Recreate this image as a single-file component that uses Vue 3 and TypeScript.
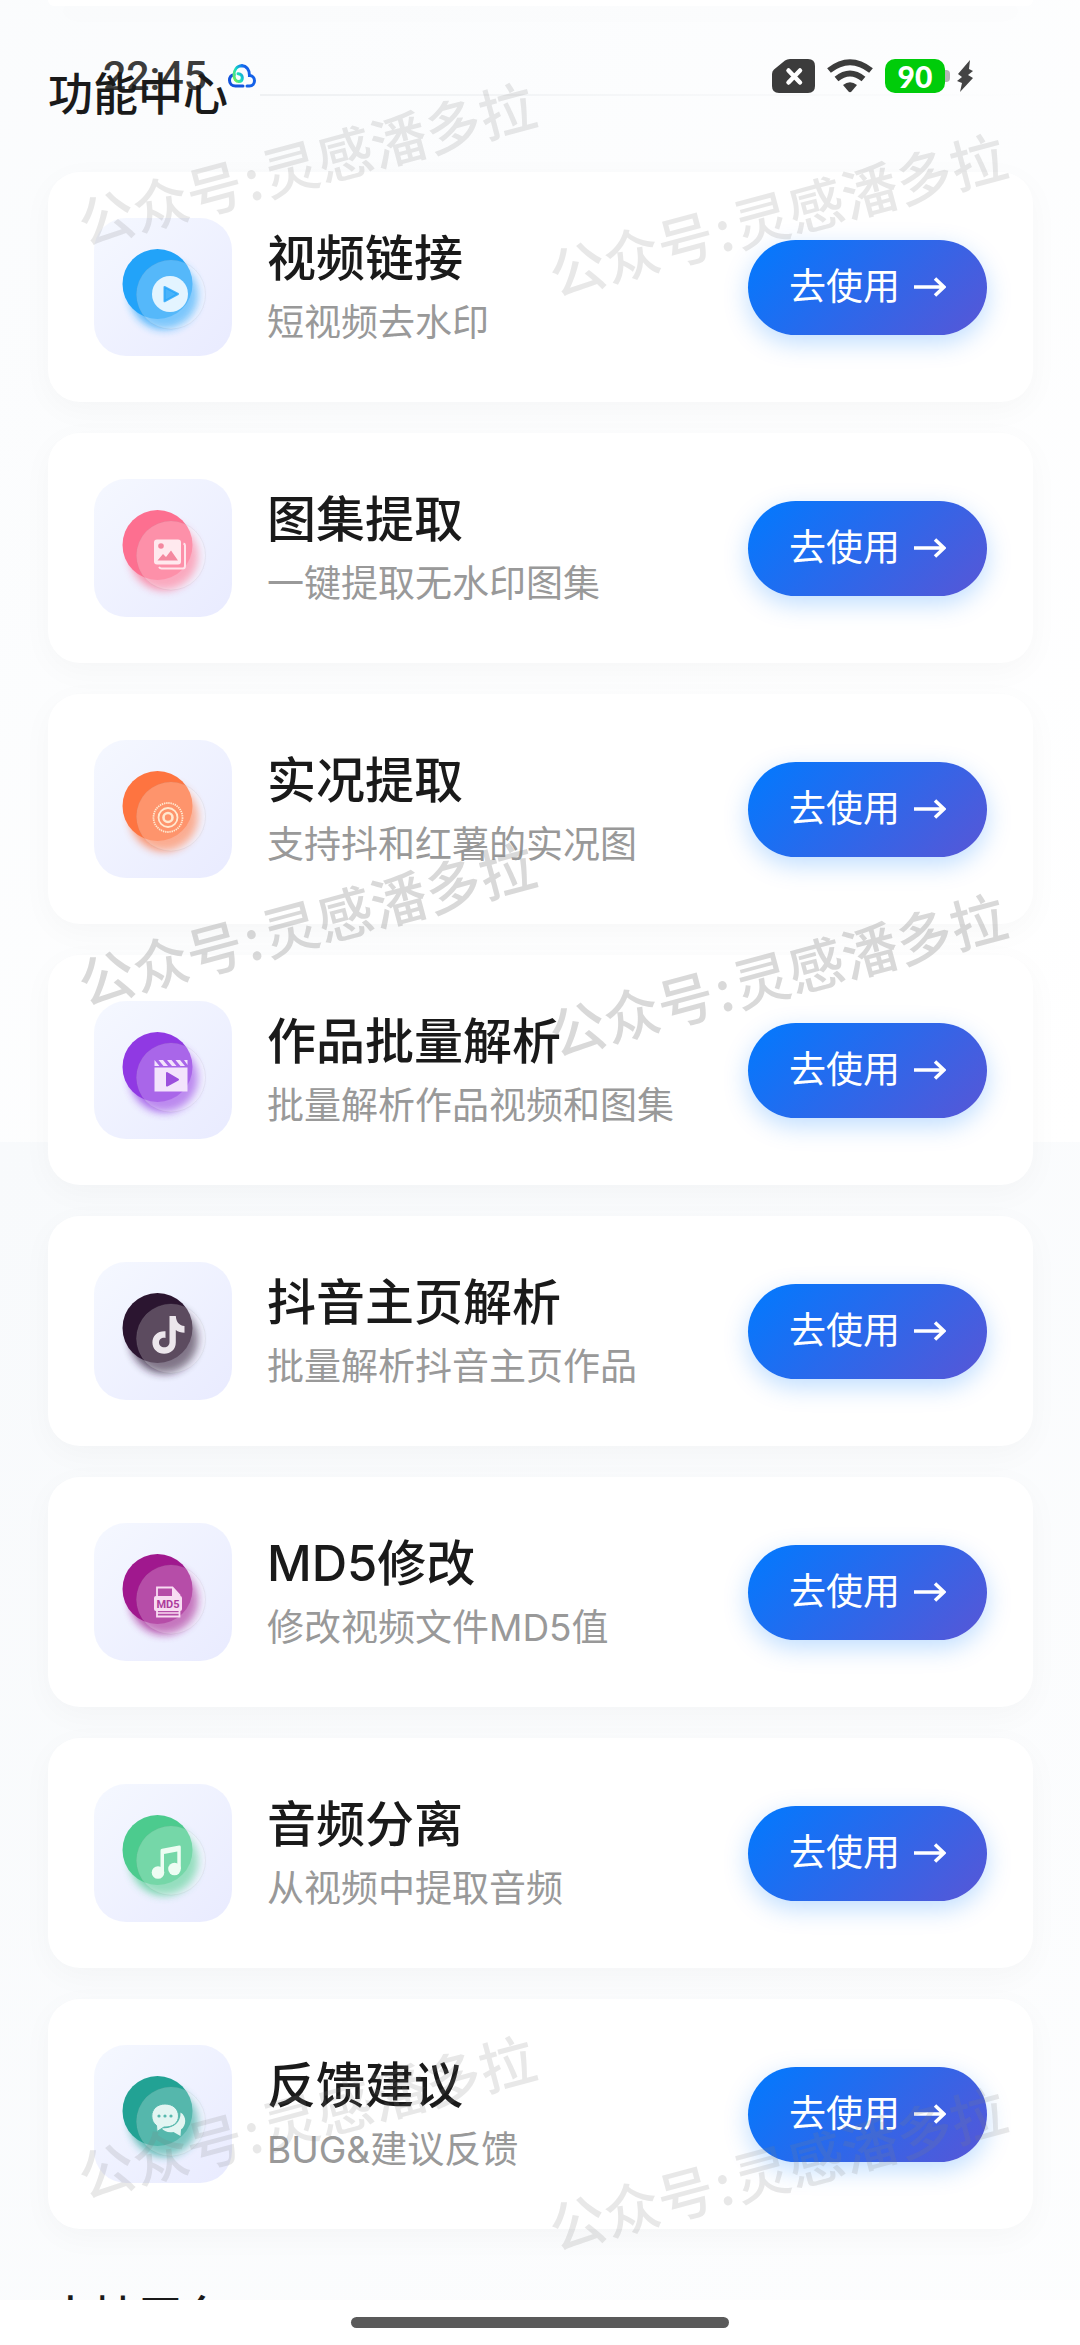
<script setup lang="ts">
type IconName = 'video' | 'gallery' | 'live' | 'batch' | 'note' | 'md5' | 'music' | 'chat'

interface Feature {
  icon: IconName
  color: string
  title: string
  desc: string
}

interface Mark {
  x: number
  y: number
  strong: boolean
}

const features: Feature[] = [
  { icon: 'video', color: '#22a3f9', title: '视频链接', desc: '短视频去水印' },
  { icon: 'gallery', color: '#fd6f90', title: '图集提取', desc: '一键提取无水印图集' },
  { icon: 'live', color: '#fe7440', title: '实况提取', desc: '支持抖和红薯的实况图' },
  { icon: 'batch', color: '#9039e3', title: '作品批量解析', desc: '批量解析作品视频和图集' },
  { icon: 'note', color: '#2b1530', title: '抖音主页解析', desc: '批量解析抖音主页作品' },
  { icon: 'md5', color: '#a0188e', title: 'MD5修改', desc: '修改视频文件MD5值' },
  { icon: 'music', color: '#4ccb8e', title: '音频分离', desc: '从视频中提取音频' },
  { icon: 'chat', color: '#22a294', title: '反馈建议', desc: 'BUG&建议反馈' },
]

// Watermark centres, as percentages of the screen.
const marks: Mark[] = [
  { x: 28.3, y: 6.9, strong: false },
  { x: 71.9, y: 9.1, strong: false },
  { x: 28.3, y: 39.3, strong: true },
  { x: 71.9, y: 41.5, strong: true },
  { x: 28.3, y: 90.2, strong: false },
  { x: 71.9, y: 92.4, strong: false },
]
</script>

<template>
  <div class="screen">
    <header class="status">
      <span class="time">22:45</span>
      <svg class="cloud" viewBox="0 0 28 24" aria-hidden="true">
        <defs>
          <linearGradient id="cloud-loop" x1="0" y1="1" x2="1" y2="0">
            <stop offset="0" stop-color="#7df04a" />
            <stop offset="0.5" stop-color="#16dcc0" />
            <stop offset="1" stop-color="#1272f2" />
          </linearGradient>
        </defs>
        <path d="M15 22H7.500C4 22 1.500 19.500 1.500 16.300C1.500 13.300 3.500 11.200 6 10.700" fill="none" stroke="#1254dd" stroke-width="3" stroke-linecap="round" />
        <path d="M19 22H21.500C24.500 22 26.500 19.600 26.500 16.800C26.500 13.800 24.300 11.800 21.500 11.600C21.800 6 18.500 1.800 13.700 1.800" fill="none" stroke="#1461e8" stroke-width="3" stroke-linecap="round" />
        <path d="M14 1.800C8.500 2 6 6.500 6 11C6 15 8 17.500 10.800 17.500C13.200 17.500 14.300 15.800 14.300 13.800C14.300 11.500 12.500 10 10 9.700" fill="none" stroke="url(#cloud-loop)" stroke-width="3" stroke-linecap="round" />
      </svg>
      <div class="signals">
        <svg class="sim" viewBox="0 0 43 34" aria-hidden="true">
          <path d="M13 1.500Q15 0 18 0H36Q43 0 43 7V27Q43 34 36 34H7Q0 34 0 27V15Q0 12 2 10.500Z" fill="#3c3c3c" />
          <path d="M16.500 11.500L28 23.500M28 11.500L16.500 23.500" stroke="#fff" stroke-width="4.500" stroke-linecap="round" />
        </svg>
        <svg class="wifi" viewBox="0 0 46 34" aria-hidden="true">
          <path d="M2 11.500Q23-5 44 11.500" fill="none" stroke="#3c3c3c" stroke-width="6" />
          <path d="M9.500 20Q23 9 36.500 20" fill="none" stroke="#3c3c3c" stroke-width="6" />
          <path d="M16 26Q23 20.500 30 26L24.500 32.500Q23 34 21.500 32.500Z" fill="#3c3c3c" />
        </svg>
        <span class="battery">90</span>
        <svg class="bolt" viewBox="0 0 16 32" aria-hidden="true">
          <path d="M13 0L1 14L5 17L0 21L5 23L3 32L16 18L11 15L16 11L12 9Z" fill="#444" />
        </svg>
      </div>
    </header>

    <main class="content">
      <div class="card-tail"></div>

      <h2 class="heading"><span>功能中心</span></h2>
      <ul class="list">
        <li v-for="f in features" :key="f.title" class="card">
          <svg class="icon" viewBox="0 0 138 138" aria-hidden="true">
            <defs>
              <filter :id="'blur-' + f.icon" x="-30%" y="-30%" width="160%" height="160%">
                <feGaussianBlur stdDeviation="4" />
              </filter>
            </defs>
            <circle cx="70" cy="77" r="34" :fill="f.color" opacity="0.75" :filter="'url(#blur-' + f.icon + ')'" />
            <circle cx="63.500" cy="66" r="35" :fill="f.color" />
            <circle cx="77" cy="76.500" r="34.500" fill="#fff" fill-opacity="0.23" stroke="#aaa" stroke-opacity="0.14" />

            <g v-if="f.icon === 'video'">
              <circle cx="76" cy="76" r="18" fill="#e3f4ff" />
              <path d="M70.500 69L84 76L70.500 83.300Z" :fill="f.color" fill-opacity="0.8" :stroke="f.color" stroke-opacity="0.8" stroke-width="2" stroke-linejoin="round" />
            </g>
            <g v-else-if="f.icon === 'gallery'">
              <path d="M89.500 64.500Q91 65 91 66.500V87Q91 89.500 88.500 89.500H67.500Q66 89.500 65 88" fill="none" stroke="#ffe3ea" stroke-width="2" />
              <rect x="60" y="60.500" width="27" height="25" rx="3" fill="#ffe9ee" />
              <circle cx="67" cy="67" r="2.800" fill="#f4889f" />
              <path d="M63.500 81.500L69 75L72 78L77 71.500L84 81.500Z" fill="#f4889f" />
            </g>
            <g v-else-if="f.icon === 'live'" fill="none" stroke="#ffe8cf">
              <circle cx="74" cy="77.500" r="4.500" stroke-width="2.600" />
              <circle cx="74" cy="77.500" r="9.500" stroke-width="1.800" />
              <circle cx="74" cy="77.500" r="14.500" stroke-width="1.800" stroke-dasharray="1.400 0.800" />
            </g>
            <g v-else-if="f.icon === 'batch'">
              <path d="M60.500 59L65.500 65H60.500ZM64.500 59H69L74 65H69.500ZM73 59H77.500L82.500 65H78ZM81.500 59H86L91 65H86.500ZM90 59H93.500V64Z" fill="#f3e4fc" />
              <rect x="60.500" y="66.500" width="33" height="24" fill="#f3e4fc" />
              <path d="M73 72L84 78.500L73 84.500Z" fill="#9c50dd" stroke="#9c50dd" stroke-width="2" stroke-linejoin="round" />
            </g>
            <g v-else-if="f.icon === 'note'">
              <path d="M75.500 54H81.800C82.300 60.500 85.500 63.500 90.500 64V70.800C87 70.800 84 69.700 81.800 68V80.500C81.800 87.500 76.500 91.800 70.200 91.800C63.500 91.800 58.400 87 58.400 80.500C58.400 73.500 64 68.600 71.500 69.200V76C67.800 75.300 65 77.400 65 80.500C65 83.400 67.300 85.300 70.200 85.300C73.300 85.300 75.500 83.300 75.500 80Z" fill="#ece6ec" />
            </g>
            <g v-else-if="f.icon === 'md5'">
              <path d="M63 74V64.500H78.500L85.500 72V93.500H63V86" fill="none" stroke="#f8dcf2" stroke-width="1.800" />
              <path d="M78 64L86 73H78Z" fill="#f8dcf2" />
              <rect x="60" y="73" width="28" height="15" rx="2" fill="#f8dcf2" />
              <path d="M63 90H85.500" stroke="#f8dcf2" stroke-width="1.500" />
              <text x="74" y="84.500" text-anchor="middle" class="md5" fill="#ad3c9c">MD5</text>
            </g>
            <g v-else-if="f.icon === 'music'" fill="#eefdf3">
              <circle cx="64" cy="88.500" r="6.300" />
              <circle cx="80.500" cy="85" r="6.300" />
              <path d="M66.500 66.500Q66.500 65 68 64.700L85.200 61.600Q86.800 61.500 86.800 63V85H83.300V67.500L70 70V89H66.500Z" />
            </g>
            <g v-else>
              <path d="M86.500 67.500C93 71 92.500 81 87 84.500L86.500 91L79.500 87C74 88 69.500 86 67.500 83C78 84.500 87 78 86.500 67.500Z" fill="#e3f5f2" />
              <path d="M71 59C79 59 84.500 64 84.500 71C84.500 78 78.500 82.500 70 82L63 86.500L62.500 80.500C59.500 78.500 57.800 75 57.800 71C57.800 64 63.500 59 71 59Z" fill="#e3f5f2" stroke="#58b9ae" stroke-width="1" />
              <circle cx="65" cy="71" r="1.600" fill="#58b9ae" />
              <circle cx="71" cy="71" r="1.600" fill="#58b9ae" />
              <circle cx="77" cy="71" r="1.600" fill="#58b9ae" />
            </g>
          </svg>
          <div class="info">
            <h3>{{ f.title }}</h3>
            <p>{{ f.desc }}</p>
          </div>
          <button type="button" class="use">
            去使用
            <svg viewBox="0 0 32 20" aria-hidden="true">
              <path d="M0 10H30M21 1.500L30 10L21 18.500" fill="none" stroke="#fff" stroke-width="3.500" />
            </svg>
          </button>
        </li>
      </ul>

      <h2 class="heading"><span>支持平台</span></h2>
    </main>

    <footer class="home"><span></span></footer>

    <div class="marks" aria-hidden="true">
      <span
        v-for="(m, i) in marks"
        :key="i"
        class="mark"
        :class="{ strong: m.strong }"
        :style="{ left: m.x + '%', top: m.y + '%' }"
      >公众号<i>:</i>灵感潘多拉</span>
    </div>
  </div>
</template>

<style>
body {
  margin: 0;
}
</style>

<style scoped>
.screen {
  position: relative;
  display: flex;
  flex-direction: column;
  height: 100vh;
  overflow: hidden;
  font-family: Inter, 'Noto Sans CJK SC', sans-serif;
  color: #1a1a1a;
  background: linear-gradient(135deg, #f8fafc, #ffffff) 0 1142px / 100% 100vh;
}

.status {
  position: absolute;
  top: 56px;
  left: 0;
  right: 0;
  display: flex;
  align-items: center;
  height: 40px;
  padding: 0 107px 0 103px;
}

.time {
  font: 500 41px/42px Roboto, sans-serif;
  color: #3c3c3c;
}

.cloud {
  width: 28px;
  height: 24px;
  margin-left: 21px;
}

.signals {
  display: flex;
  align-items: center;
  margin-left: auto;
}

.sim {
  width: 43px;
  height: 34px;
}

.wifi {
  width: 46px;
  height: 34px;
  margin: 0 12px;
}

.battery {
  position: relative;
  width: 60px;
  height: 34px;
  border-radius: 10px;
  background: #00cc0a;
  color: #fff;
  font: 900 30px/34px Lato, sans-serif;
  text-align: center;
}

.battery::after {
  content: '';
  position: absolute;
  left: 60px;
  top: 11px;
  width: 5px;
  height: 12px;
  border-radius: 0 4px 4px 0;
  background: #b5b5b5;
}

.bolt {
  width: 16px;
  height: 32px;
  margin-left: 12px;
}

.content {
  position: relative;
  flex: 1;
  min-height: 0;
  overflow: hidden;
  padding: 0 47px 0 48px;
}

.card-tail,
.card {
  background: #fff;
  box-shadow: 0 8px 32px rgba(0, 0, 0, 0.03);
}

.card-tail {
  height: 6px;
  border-radius: 0 0 32px 32px;
}

.heading {
  display: flex;
  align-items: center;
  gap: 32px;
  margin: 0;
  padding: 62px 0 50px;
  font-size: 45px;
  line-height: 54px;
  font-weight: 500;
}

.heading::after {
  content: '';
  flex: 1;
  height: 2px;
  background: linear-gradient(90deg, #eff1f3, rgba(240, 242, 244, 0));
}

.list {
  display: flex;
  flex-direction: column;
  gap: 31px;
  margin: 0;
  padding: 0;
  list-style: none;
}

.card {
  display: flex;
  align-items: center;
  padding: 46px;
  border-radius: 32px;
}

.icon {
  flex: none;
  width: 138px;
  height: 138px;
  border-radius: 32px;
  background: linear-gradient(135deg, #f5f8ff, #e9ebff);
}

.md5 {
  font: 700 11px Roboto, sans-serif;
}

.info {
  flex: 1;
  margin-left: 35px;
}

.info h3 {
  margin: 0;
  font-size: 49px;
  line-height: 64px;
  font-weight: 500;
}

.info p {
  margin: 8px 0 0;
  font-size: 37px;
  line-height: 48px;
  color: #999;
}

.use {
  display: flex;
  align-items: center;
  justify-content: center;
  gap: 14px;
  width: 239px;
  height: 95px;
  padding: 0;
  border: 0;
  border-radius: 48px;
  background: linear-gradient(135deg, #007aff, #5856d6);
  box-shadow: 0 8px 24px rgba(0, 122, 255, 0.25);
  color: #fff;
  font: 400 37px/48px Inter, 'Noto Sans CJK SC', sans-serif;
}

.use svg {
  width: 32px;
  height: 20px;
}

.home {
  position: relative;
  display: flex;
  justify-content: center;
  height: 28px;
  padding-top: 17px;
  background: #fff;
}

.home span {
  width: 35%;
  height: 11px;
  border-radius: 6px;
  background: #5a5a5a;
}

.marks {
  position: absolute;
  inset: 0;
  pointer-events: none;
}

.mark {
  position: absolute;
  transform: translate(-50%, -50%) rotate(-15deg);
  font-family: 'Noto Sans CJK SC', sans-serif;
  font-size: 56px;
  line-height: 64px;
  font-weight: 500;
  white-space: nowrap;
  color: rgba(128, 128, 128, 0.18);
}

.mark i {
  padding: 0 3px;
  font-style: normal;
}

.mark.strong {
  color: rgba(128, 128, 128, 0.3);
}
</style>
